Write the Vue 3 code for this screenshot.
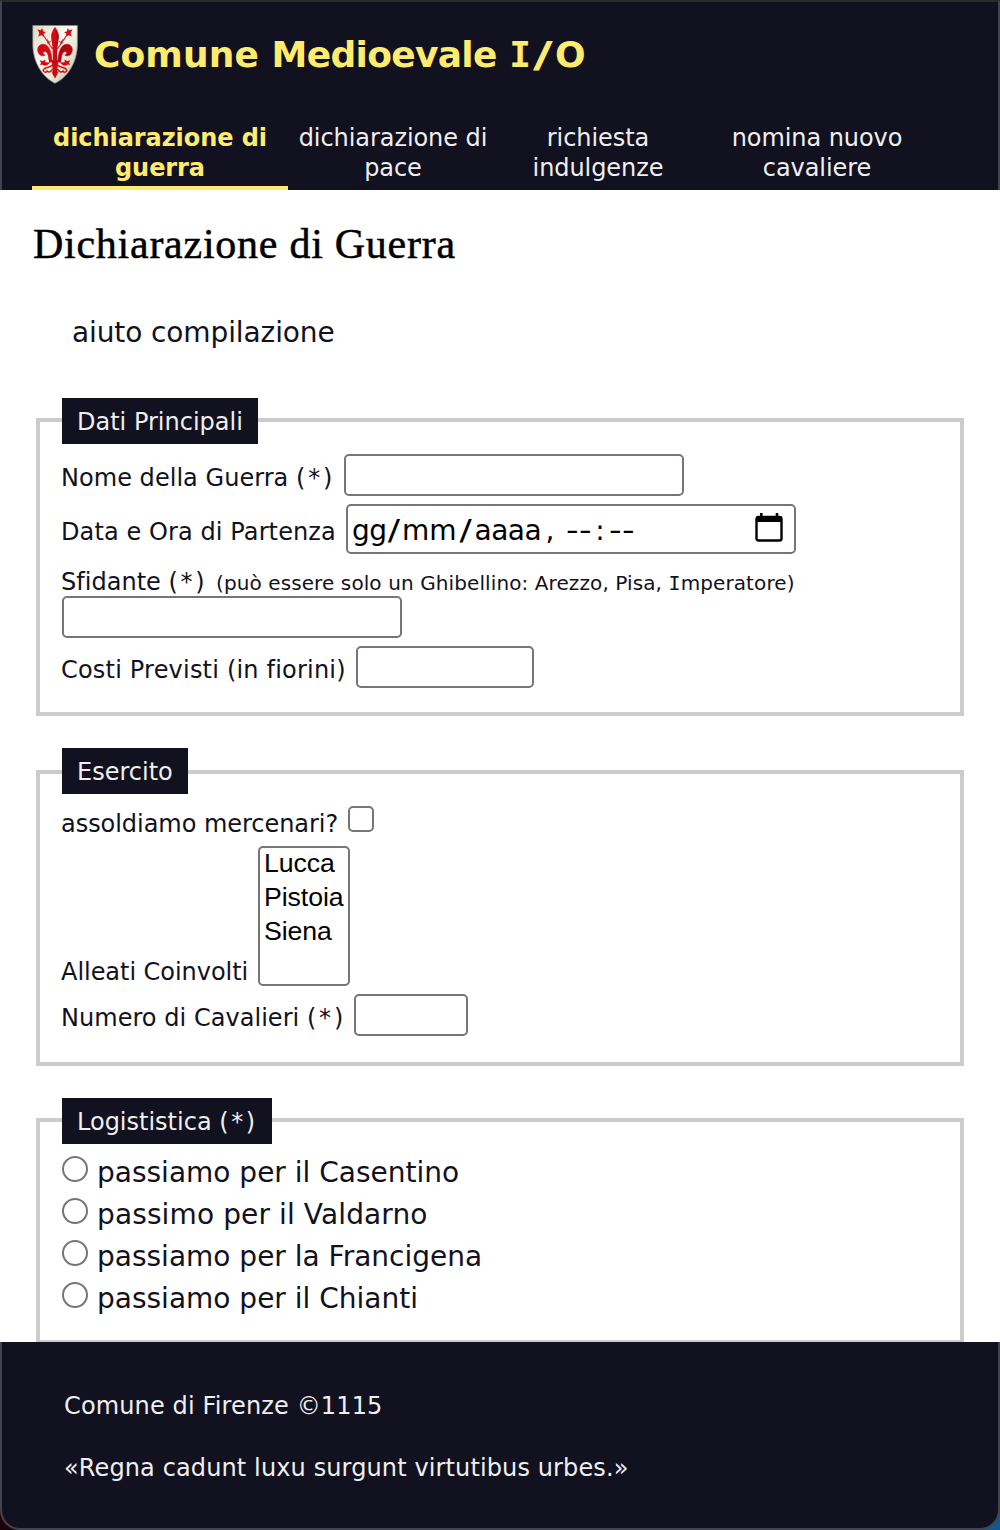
<script setup>
const nav = [
  { key: 'guerra', lines: ['dichiarazione di', 'guerra'], active: true },
  { key: 'pace', lines: ['dichiarazione di', 'pace'] },
  { key: 'indulgenze', lines: ['richiesta', 'indulgenze'] },
  { key: 'cavaliere', lines: ['nomina nuovo', 'cavaliere'] },
]
const allies = ['Lucca', 'Pistoia', 'Siena']
const routes = [
  { key: 'casentino', label: 'passiamo per il Casentino' },
  { key: 'valdarno', label: 'passimo per il Valdarno' },
  { key: 'francigena', label: 'passiamo per la Francigena' },
  { key: 'chianti', label: 'passiamo per il Chianti' },
]
</script>

<template>
  <div class="page">
    <header class="top">
      <div class="brand">
        <svg class="crest" viewBox="0 0 46 59" width="46" height="59">
          <defs>
            <linearGradient id="shield" x1="0" y1="0" x2="1" y2="1">
              <stop offset="0" stop-color="#d9d7c2" />
              <stop offset=".4" stop-color="#fbfaf2" />
              <stop offset=".65" stop-color="#e9e7d6" />
              <stop offset="1" stop-color="#b9b7a0" />
            </linearGradient>
            <linearGradient id="petal" x1="0" y1="0" x2="1" y2="0">
              <stop offset="0" stop-color="#e30a10" />
              <stop offset=".6" stop-color="#cf0810" />
              <stop offset="1" stop-color="#9c0512" />
            </linearGradient>
          </defs>
          <path d="M.8.5H45.4V20C45.2 37 36 52 23 58.3 10 52 1 37 .8 20Z" fill="url(#shield)" stroke="#8d8c82" stroke-width=".7" />
          <g fill="#d60a12">
            <path d="M20 35.500C19.600 28 17.500 19.500 11.500 19.200 7.500 19 4.900 22.500 5.900 26.200 6.800 30.500 10.500 32 13.200 30 10.900 29.500 10.500 27 12.500 26.500 15.300 26 16.600 30.500 17 35.500Z" stroke="#d60a12" stroke-width=".6" />
            <path d="M10.500 9 20.500 24" fill="none" stroke="#c41a20" stroke-width="1.100" />
            <path d="M5.500 4.200 8.500 5.200 10.500 3.300 11 6.300 13.800 7.300 11.600 8.700 12 11.500 9.300 10.300 6.200 11.600 7.300 8.300Z" />
            <path d="M15.500 14.500 17.500 20M19 16.500 15 18" fill="none" stroke="#c41a20" stroke-width="1" />
            <path d="M18 37.500C15 41 12.500 41.500 10 39.500L8 40.500 9 37.500 7.600 35.300 11 36 13.500 34.600 13.300 37.300Z" />
            <path d="M21 39.500C18 43 15 42 12.500 43.500 10 45.500 12 48 15 46.800M20.500 44C18.500 48 16 47.500 14.500 45.500" fill="none" stroke="#d6141a" stroke-width="1.500" />
          </g>
          <g transform="matrix(-1 0 0 1 46 0)" fill="#b20712">
            <path d="M20 35.500C19.600 28 17.500 19.500 11.500 19.200 7.500 19 4.900 22.500 5.900 26.200 6.800 30.500 10.500 32 13.200 30 10.900 29.500 10.500 27 12.500 26.500 15.300 26 16.600 30.500 17 35.500Z" stroke="#b20712" stroke-width=".6" />
            <path d="M10.500 9 20.500 24" fill="none" stroke="#b81a20" stroke-width="1.100" />
            <path d="M5.500 4.200 8.500 5.200 10.500 3.300 11 6.300 13.800 7.300 11.600 8.700 12 11.500 9.300 10.300 6.200 11.600 7.300 8.300Z" fill="#cf1018" />
            <path d="M15.500 14.500 17.500 20M19 16.500 15 18" fill="none" stroke="#b81a20" stroke-width="1" />
            <path d="M18 37.500C15 41 12.500 41.500 10 39.500L8 40.500 9 37.500 7.600 35.300 11 36 13.500 34.600 13.300 37.300Z" fill="#cf1018" />
            <path d="M21 39.500C18 43 15 42 12.500 43.500 10 45.500 12 48 15 46.800M20.500 44C18.500 48 16 47.500 14.500 45.500" fill="none" stroke="#cc1018" stroke-width="1.500" />
          </g>
          <path d="M23 2C25.300 5.500 27.400 8.500 26.800 13 26.200 18 25.200 21 25 36H21C20.800 21 19.800 18 19.200 13 18.600 8.500 20.700 5.500 23 2Z" fill="url(#petal)" />
          <path d="M17 35H29V37.600H26L25.300 45 26 48 23 53.500 20 48 20.700 45 20 37.600H17Z" fill="#c80a12" />
        </svg>
        <div class="brand-name">Comune <span class="tight">Medioevale</span> <span class="serif-i">I</span><span class="slash">/</span>O</div>
      </div>
      <nav class="tabs">
        <a v-for="n in nav" :key="n.key" class="tab" :class="[n.key, { active: n.active }]">
          <span v-for="l in n.lines" :key="l">{{ l }}</span>
        </a>
      </nav>
    </header>

    <main class="main">
      <h1 class="title">Dichiarazione di Guerra</h1>
      <div class="help">aiuto compilazione</div>

      <section class="group main-data">
        <div class="legend">Dati Principali</div>
        <div class="row r-name">
          <label>Nome della Guerra <span class="req">(*)</span></label>
          <div class="box"></div>
        </div>
        <div class="row r-date">
          <label>Data e Ora di Partenza</label>
          <div class="box date">
            <span class="dd">gg</span><span class="s1">/</span><span class="mm">mm</span><span class="s2">/</span><span class="yy">aaaa</span><span class="cm">,</span><span class="dash">--</span><span class="col">:</span><span class="dash">--</span>
            <svg class="cal" viewBox="0 0 28 30" width="28" height="30">
              <rect x="1.500" y="5" width="25" height="23.500" rx="2" fill="none" stroke="#000" stroke-width="2.400" />
              <path d="M1 4.500H27V10H1ZM5 1H7.600V5H5ZM20.700 1H23.300V5H20.700Z" />
            </svg>
          </div>
        </div>
        <div class="row r-foe">
          <label>Sfidante <span class="req">(*)</span></label>
          <small>(può essere solo un Ghibellino: Arezzo, Pisa, <span class="serif-i">I</span>mperatore)</small>
        </div>
        <div class="box foe-box"></div>
        <div class="row r-cost">
          <label>Costi Previsti (in fiorini)</label>
          <div class="box"></div>
        </div>
      </section>

      <section class="group army">
        <div class="legend">Esercito</div>
        <div class="row r-merc">
          <label>assoldiamo mercenari?</label>
          <div class="check"></div>
        </div>
        <div class="row r-ally">
          <label>Alleati Coinvolti</label>
          <div class="box list">
            <div v-for="a in allies" :key="a">{{ a }}</div>
          </div>
        </div>
        <div class="row r-num">
          <label>Numero di Cavalieri <span class="req">(*)</span></label>
          <div class="box"></div>
        </div>
      </section>

      <section class="group logistics">
        <div class="legend">Logististica <span class="req">(*)</span></div>
        <div class="routes">
          <label v-for="r in routes" :key="r.key" class="route" :class="r.key">
            <i class="radio"></i><span>{{ r.label }}</span>
          </label>
        </div>
      </section>
    </main>

    <div class="desk">
      <footer class="foot">
        <p class="copy">Comune di Firenze ©1115</p>
        <p class="motto">«Regna cadunt luxu surgunt virtutibus urbes.»</p>
      </footer>
    </div>
  </div>
</template>

<style>
body { background: #fff; }
</style>

<style scoped>
* { box-sizing: border-box; }
.page {
  width: 1000px;
  height: 1530px;
  display: flex;
  flex-direction: column;
  overflow: hidden;
  background: #fff;
  color: #121120;
  font: 24px/30px "DejaVu Sans", Verdana, sans-serif;
  white-space: nowrap;
}

.top {
  height: 190px;
  flex: none;
  display: flex;
  flex-direction: column;
  justify-content: space-between;
  background: #121120;
  border: 2px solid #42434c;
  border-top-color: #2a2b2b;
  border-bottom: 0;
  padding: 23px 62px 0 30px;
}
.brand { display: flex; height: 59px; }
.crest { flex: none; }
.brand-name {
  margin: 9px 0 0 16px;
  font-weight: bold;
  font-size: 36px;
  line-height: 42px;
  letter-spacing: .1px;
  color: #ffec6e;
}
.tight { letter-spacing: -.7px; }
.slash { display: inline-block; width: 24px; text-align: center; transform: scaleX(1.5); }
.serif-i { font-family: "DejaVu Sans Mono", monospace; }
.tabs { display: flex; height: 67px; }
.tab {
  display: flex;
  flex-direction: column;
  align-items: center;
  color: #efefef;
  letter-spacing: -.07px;
}
.tab.guerra { width: 256px; }
.tab.pace { width: 210px; }
.tab.indulgenze { width: 200px; }
.tab.cavaliere { width: 238px; }
.tab.active {
  color: #ffec6e;
  font-weight: bold;
  border-bottom: 4px solid #ffec6e;
}

.main {
  height: 1152px;
  flex: none;
  overflow: hidden;
  padding: 0 36px;
}
.title {
  margin: 30px 0 0 -3px;
  font: 400 42px/48px "Liberation Serif", Georgia, serif;
  letter-spacing: .74px;
  color: #000;
  -webkit-text-stroke: .5px #000;
}
.help {
  margin: 45px 0 0 36px;
  font-size: 28px;
  line-height: 40px;
  letter-spacing: -.11px;
}

.group {
  border: 4px solid #ccc;
  padding-left: 22px;
  display: flex;
  flex-direction: column;
  align-items: flex-start;
}
.main-data { margin-top: 65px; height: 298px; }
.army { margin-top: 54px; height: 296px; }
.logistics { margin-top: 52px; height: 226px; }
.legend {
  flex: none;
  height: 46px;
  margin-top: -24px;
  padding: 9px 0 0 15px;
  background: #121120;
  color: #efefef;
  width: 196px;
}
.army .legend { width: 126px; margin-top: -26px; }
.logistics .legend { width: 210px; }
.req { letter-spacing: 2.6px; }

.row { display: flex; align-items: flex-start; flex: none; margin-left: -1px; }
.row label { display: block; flex: none; }
.box {
  flex: none;
  height: 42px;
  border: 2px solid #767676;
  border-radius: 5px;
  background: #fff;
}
.r-name { margin-top: 10px; }
.r-name label { width: 283px; padding-top: 9px; letter-spacing: .04px; }
.r-name .req, .r-num .req { letter-spacing: 2.8px; }
.r-name .box { width: 340px; }
.r-date { margin-top: 8px; }
.r-date label { width: 285px; padding-top: 13px; letter-spacing: .1px; }
.date {
  width: 450px;
  height: 50px;
  display: flex;
  padding: 4px 0 0 4px;
  color: #000;
  font-size: 28px;
  line-height: 42px;
}
.date span { flex: none; }
.dd { width: 34px; letter-spacing: -.6px; }
.s1 { width: 16px; text-align: center; transform: scaleX(1.3); }
.mm { width: 55px; }
.s2 { width: 17.500px; text-align: center; transform: scaleX(1.3); }
.yy { width: 67px; letter-spacing: -.5px; }
.cm { width: 24px; padding-left: 4px; }
.dash { width: 25.500px; letter-spacing: .3px; transform: scaleX(1.25); transform-origin: left; }
.col { width: 18px; text-align: center; }
.cal { margin: 2px 11px 0 auto; flex: none; }
.r-foe { margin-top: 13px; height: 29px; }
.r-foe label { width: 155px; letter-spacing: .03px; }
.r-foe small { font-size: 20px; letter-spacing: .1px; line-height: 32px; }
.foe-box { width: 340px; }
.r-cost { margin-top: 8px; }
.r-cost label { width: 295px; padding-top: 9px; letter-spacing: .2px; }
.r-cost .box { width: 178px; }

.r-merc { margin-top: 12px; height: 40px; }
.r-merc label { width: 287px; padding-top: 3px; letter-spacing: -.04px; }
.check { width: 26px; height: 26px; border: 2px solid #767676; border-radius: 5px; }
.r-ally { height: 140px; }
.r-ally label { width: 197px; padding-top: 111px; letter-spacing: -.04px; }
.list {
  width: 92px;
  height: 140px;
  padding-left: 4px;
  color: #000;
  font: 26.670px/34px "Liberation Sans", Arial, sans-serif;
  letter-spacing: -.06px;
}
.list div { margin-top: -2px; margin-bottom: 2px; }
.r-num { margin-top: 8px; }
.r-num label { width: 293px; padding-top: 9px; letter-spacing: .04px; }
.r-num .box { width: 114px; }

.routes { margin-top: 8px; display: flex; flex-direction: column; }
.route {
  display: flex;
  height: 42px;
  font-size: 28px;
  line-height: 42px;
}
.route.valdarno { letter-spacing: .12px; }
.radio {
  width: 26px;
  height: 26px;
  margin: 4px 9px 0 0;
  border: 2px solid #767676;
  border-radius: 50%;
}

.desk {
  flex: none;
  height: 188px;
  background: linear-gradient(90deg, #1c0308 50%, #0a5a96 50%);
}
.foot {
  height: 188px;
  background: #121120;
  border: 2px solid #42434c;
  border-top: 0;
  border-radius: 0 0 20px 20px;
  color: #efefef;
  padding: 49px 62px 0;
}
.foot p { margin: 0 0 32px; }
.copy { letter-spacing: .14px; }
.motto { letter-spacing: .12px; }
</style>
